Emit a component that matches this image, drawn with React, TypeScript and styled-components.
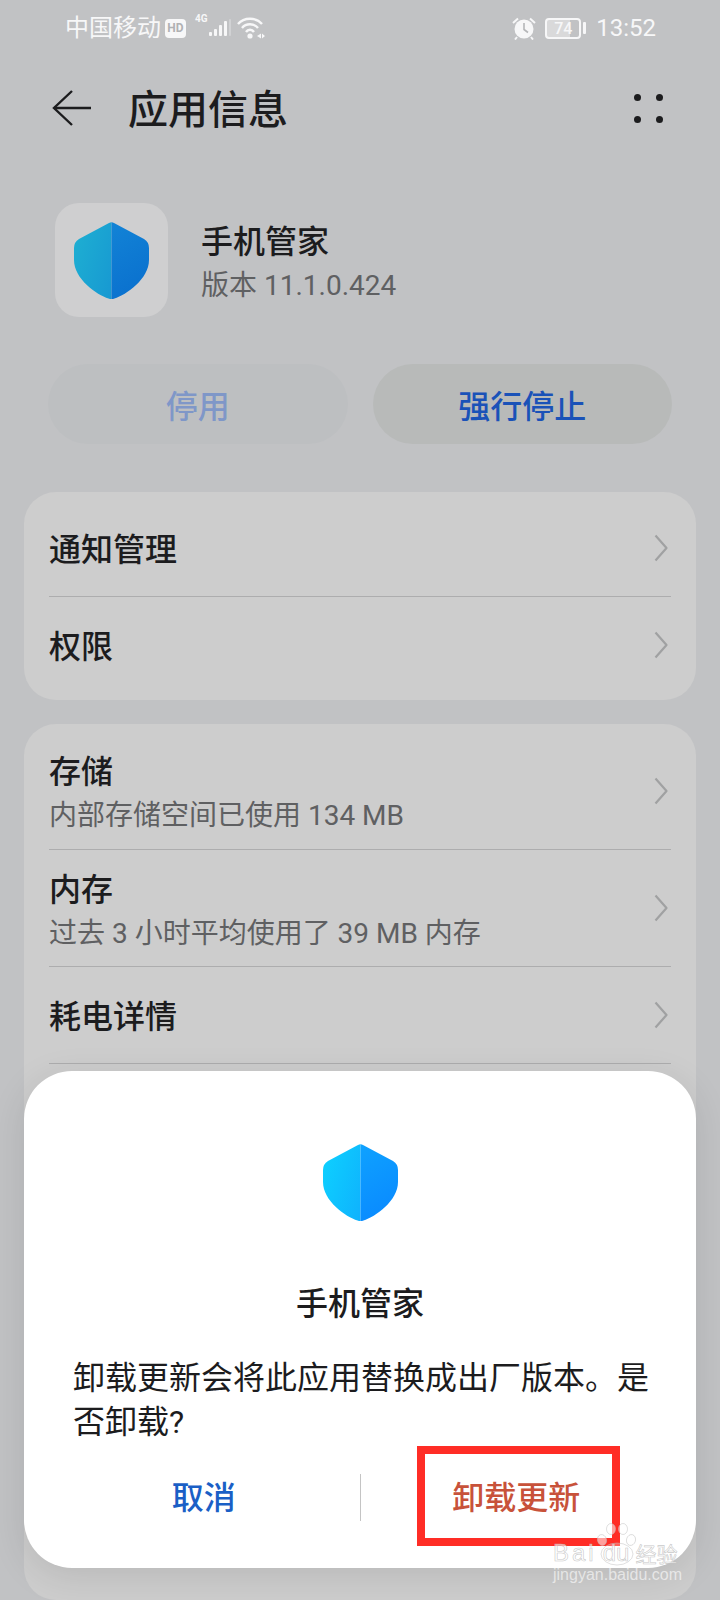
import styled, { createGlobalStyle } from 'styled-components';

const GlobalStyle = createGlobalStyle`
  html, body {
    margin: 0;
    padding: 0;
    background: #c1c2c4;
  }
  * {
    box-sizing: border-box;
  }
`;

const SHIELD_PATH =
  'M35 .9 Q37.5 -.4 40 .9 L70 17 Q75 20 75 26 V38 C75 57 52 73 40.5 76.5 Q37.5 77.5 34.5 76.5 C23 73 0 57 0 38 V26 Q0 20 5 17 Z';

const Shield = ({ id, colors }: { id: string; colors: [string, string, string, string] }) => (
  <svg width="75" height="77" viewBox="0 0 75 77">
    <defs>
      <linearGradient id={`${id}-l`} x1="0" y1="0" x2="1" y2="0.3">
        <stop offset="0" stopColor={colors[0]} />
        <stop offset="1" stopColor={colors[1]} />
      </linearGradient>
      <linearGradient id={`${id}-r`} x1="0" y1="0" x2="0.6" y2="1">
        <stop offset="0" stopColor={colors[2]} />
        <stop offset="1" stopColor={colors[3]} />
      </linearGradient>
      <clipPath id={`${id}-cl`}>
        <rect x="0" y="0" width="37.5" height="77" />
      </clipPath>
      <clipPath id={`${id}-cr`}>
        <rect x="37.5" y="0" width="37.5" height="77" />
      </clipPath>
    </defs>
    <path d={SHIELD_PATH} fill={`url(#${id}-l)`} clipPath={`url(#${id}-cl)`} />
    <path d={SHIELD_PATH} fill={`url(#${id}-r)`} clipPath={`url(#${id}-cr)`} />
  </svg>
);

const Chevron = () => (
  <svg width="14" height="28" viewBox="0 0 14 28" fill="none">
    <path d="M1.5 1.5 L12.5 14 L1.5 26.5" stroke="#a0a1a2" strokeWidth="2.2" strokeLinejoin="round" />
  </svg>
);

export default function App() {
  return (
    <Page>
      <GlobalStyle />
      <StatusBar>
        <StatusLeft>
          <Carrier>中国移动</Carrier>
          <HdBadge>HD</HdBadge>
          <FourG>4G</FourG>
          <svg width="22" height="18" viewBox="0 0 22 18" fill="#f7f7f8">
            <rect x="0" y="13" width="3" height="4" rx="1" />
            <rect x="5" y="10" width="3" height="7" rx="1" />
            <rect x="10" y="6" width="3" height="11" rx="1" />
            <rect x="15" y="2" width="3" height="15" rx="1" />
            <rect x="20" y="0" width="2" height="17" rx="1" opacity="0.3" />
          </svg>
          <WifiIcon width="28" height="24" viewBox="0 0 28 24" fill="none" stroke="#f7f7f8" strokeWidth="2.4">
            <path d="M1 8 C7 1 19 1 25 8" />
            <path d="M5 12 C9 7 17 7 21 12" />
            <path d="M9 16 C11 13 15 13 17 16" />
            <circle cx="13" cy="20" r="2.6" fill="#f7f7f8" stroke="none" />
            <path d="M20 20 L24 17.5 V22.5 Z M28 20 L25 17.5 V22.5 Z" fill="#f7f7f8" stroke="none" />
          </WifiIcon>
        </StatusLeft>
        <StatusRight>
          <svg width="24" height="23" viewBox="0 0 24 23">
            <circle cx="12" cy="12" r="9.5" fill="#f7f7f8" />
            <path d="M12 6 V12.5 L16 15.5" stroke="#b5b6b8" strokeWidth="1.6" fill="none" />
            <path d="M1 6 L6 1.5 M23 6 L18 1.5 M5 20 L3 22.5 M19 20 L21 22.5" stroke="#f7f7f8" strokeWidth="2" />
          </svg>
          <Battery>
            <BatteryBody>74</BatteryBody>
            <BatteryTip />
          </Battery>
          <Clock>13:52</Clock>
        </StatusRight>
      </StatusBar>

      <Header>
        <HeaderLeft>
          <svg width="40" height="36" viewBox="0 0 40 36" fill="none" stroke="#1c1c1e" strokeWidth="2.4">
            <path d="M20 1 L2 18 L20 35" />
            <path d="M2 18 H39" />
          </svg>
          <Title>应用信息</Title>
        </HeaderLeft>
        <MoreDots>
          <Dot />
          <Dot />
          <Dot />
          <Dot />
        </MoreDots>
      </Header>

      <AppInfo>
        <AppIcon>
          <Shield id="app" colors={['#1eb0d2', '#1590d2', '#1488d8', '#0b72cf']} />
        </AppIcon>
        <AppText>
          <AppName>手机管家</AppName>
          <AppVersion>版本 11.1.0.424</AppVersion>
        </AppText>
      </AppInfo>

      <ButtonRow>
        <PillButton $disabled>停用</PillButton>
        <PillButton>强行停止</PillButton>
      </ButtonRow>

      <Card>
        <Row $height={96}>
          <RowText>
            <RowTitle>通知管理</RowTitle>
          </RowText>
          <Chevron />
        </Row>
        <Row $height={96} $divider>
          <RowText>
            <RowTitle>权限</RowTitle>
          </RowText>
          <Chevron />
        </Row>
      </Card>

      <FillCard>
        <Row $height={117}>
          <RowText>
            <RowTitle>存储</RowTitle>
            <RowSub>内部存储空间已使用 134 MB</RowSub>
          </RowText>
          <Chevron />
        </Row>
        <Row $height={117} $divider>
          <RowText>
            <RowTitle>内存</RowTitle>
            <RowSub>过去 3 小时平均使用了 39 MB 内存</RowSub>
          </RowText>
          <Chevron />
        </Row>
        <Row $height={97} $divider>
          <RowText>
            <RowTitle>耗电详情</RowTitle>
          </RowText>
          <Chevron />
        </Row>
        <Row $height={40} $divider />
      </FillCard>

      <Dialog>
        <DialogIcon>
          <Shield id="dlg" colors={['#0dd2ff', '#10a6fc', '#10a8ff', '#0a8cff']} />
        </DialogIcon>
        <DialogTitle>手机管家</DialogTitle>
        <DialogBody>卸载更新会将此应用替换成出厂版本。是否卸载?</DialogBody>
        <DialogActions>
          <ActionButton $color="#1a5fc6">取消</ActionButton>
          <ActionDivider />
          <ActionButton $color="#c8523a">
            卸载更新
            <RedMark />
          </ActionButton>
        </DialogActions>
      </Dialog>

      <Watermark>
        <svg width="40" height="44" viewBox="0 0 40 44">
          <g fill="rgba(255,255,255,0.55)" stroke="rgba(190,190,190,0.6)" strokeWidth="0.8">
            <ellipse cx="5" cy="17" rx="4.5" ry="5.5" transform="rotate(-15 5 17)" />
            <ellipse cx="14" cy="6" rx="4.5" ry="5.5" />
            <ellipse cx="26" cy="6" rx="4.5" ry="5.5" />
            <ellipse cx="34" cy="17" rx="4.5" ry="5.5" transform="rotate(15 34 17)" />
            <ellipse cx="20" cy="31" rx="16" ry="11" fill="rgba(255,255,255,0.25)" />
          </g>
        </svg>
        <WatermarkLogo>
          <WatermarkBai>Bai</WatermarkBai>
          <WatermarkDu>du</WatermarkDu>
          <WatermarkCn>经验</WatermarkCn>
        </WatermarkLogo>
        <WatermarkUrl>jingyan.baidu.com</WatermarkUrl>
      </Watermark>
    </Page>
  );
}

const Page = styled.div`
  position: relative;
  display: flex;
  flex-direction: column;
  width: 720px;
  height: 1600px;
  overflow: hidden;
  background: #c1c2c4;
  font-family: Roboto, 'Noto Sans CJK SC', sans-serif;
  color: #1c1c1e;
`;

const StatusBar = styled.div`
  display: flex;
  align-items: center;
  justify-content: space-between;
  height: 54px;
  padding: 2px 64px 0 65px;
  color: #f7f7f8;
`;

const StatusLeft = styled.div`
  display: flex;
  align-items: center;
  gap: 4px;
`;

const StatusRight = styled.div`
  display: flex;
  align-items: center;
  gap: 9px;
`;

const Carrier = styled.span`
  font-size: 24px;
  line-height: 30px;
`;

const HdBadge = styled.span`
  display: flex;
  align-items: center;
  justify-content: center;
  width: 21px;
  height: 19px;
  border-radius: 4px;
  background: #f7f7f8;
  color: #b0b1b3;
  font-size: 12px;
  font-weight: 700;
`;

const FourG = styled.span`
  align-self: flex-start;
  margin: 0 -3px 0 5px;
  font-size: 10px;
  line-height: 12px;
  font-weight: 700;
`;

const WifiIcon = styled.svg`
  margin-left: 2px;
`;

const Battery = styled.div`
  display: flex;
  align-items: center;
  gap: 2px;
`;

const BatteryBody = styled.div`
  display: flex;
  align-items: center;
  justify-content: center;
  width: 36px;
  height: 21px;
  border: 2px solid #f7f7f8;
  border-radius: 4px;
  background: linear-gradient(90deg, #d9d9da 0 72%, transparent 72%);
  font-size: 16px;
  font-weight: 500;
`;

const BatteryTip = styled.div`
  width: 3px;
  height: 12px;
  border-radius: 1px;
  background: #f7f7f8;
`;

const Clock = styled.span`
  margin-left: 1px;
  font-size: 24px;
  line-height: 30px;
`;

const Header = styled.header`
  display: flex;
  align-items: center;
  justify-content: space-between;
  height: 108px;
  padding: 0 57px 0 52px;
`;

const HeaderLeft = styled.div`
  display: flex;
  align-items: center;
  gap: 36px;
`;

const Title = styled.h1`
  margin: 6px 0 0;
  font-size: 40px;
  line-height: 54px;
  font-weight: 500;
`;

const MoreDots = styled.div`
  display: grid;
  grid-template-columns: 7px 7px;
  gap: 15px;
  margin-top: 1px;
`;

const Dot = styled.span`
  width: 7px;
  height: 7px;
  border-radius: 50%;
  background: #1c1c1e;
`;

const AppInfo = styled.section`
  display: flex;
  align-items: center;
  gap: 33px;
  margin-top: 41px;
  padding-left: 55px;
`;

const AppIcon = styled.div`
  display: flex;
  align-items: center;
  justify-content: center;
  width: 113px;
  height: 114px;
  border-radius: 24px;
  background: #cfcfd0;
`;

const AppText = styled.div`
  display: flex;
  flex-direction: column;
  gap: 5px;
  padding-top: 5px;
`;

const AppName = styled.div`
  font-size: 32px;
  line-height: 42px;
  font-weight: 500;
`;

const AppVersion = styled.div`
  font-size: 28px;
  line-height: 36px;
  color: #5f6062;
`;

const ButtonRow = styled.div`
  display: flex;
  gap: 25px;
  margin-top: 47px;
  padding: 0 48px;
`;

const PillButton = styled.button<{ $disabled?: boolean }>`
  flex: 1;
  height: 80px;
  border: 0;
  border-radius: 40px;
  padding: 0;
  background: ${({ $disabled }) => ($disabled ? '#bdbfc1' : '#b8bab9')};
  color: ${({ $disabled }) => ($disabled ? '#7f97c8' : '#1a52b8')};
  font-family: inherit;
  font-size: 32px;
  font-weight: 500;
`;

const Card = styled.section`
  margin: 48px 24px 0;
  padding: 8px 0;
  border-radius: 32px;
  background: #cdcdcd;
`;

const FillCard = styled(Card)`
  flex: 1;
  margin-top: 24px;
  padding-bottom: 0;
`;

const Row = styled.div<{ $height: number; $divider?: boolean }>`
  display: flex;
  align-items: center;
  justify-content: space-between;
  height: ${({ $height }) => $height}px;
  margin: 0 25px;
  padding-right: 3px;
  border-top: ${({ $divider }) => ($divider ? '1px solid #adadae' : '0')};
`;

const RowText = styled.div`
  display: flex;
  flex-direction: column;
  gap: 5px;
  padding-top: 4px;
`;

const RowTitle = styled.div`
  font-size: 32px;
  line-height: 42px;
  font-weight: 500;
`;

const RowSub = styled.div`
  font-size: 28px;
  line-height: 36px;
  color: #5f6062;
`;

const Dialog = styled.div`
  position: absolute;
  left: 24px;
  right: 24px;
  bottom: 32px;
  height: 497px;
  padding-top: 73px;
  border-radius: 48px;
  background: #fff;
  box-shadow: 0 8px 36px rgba(0, 0, 0, 0.1);
`;

const DialogIcon = styled.div`
  display: flex;
  justify-content: center;
  height: 78px;
`;

const DialogTitle = styled.h2`
  margin: 60px 0 0;
  text-align: center;
  font-size: 32px;
  line-height: 44px;
  font-weight: 500;
`;

const DialogBody = styled.p`
  margin: 30px 0 0;
  padding: 0 44px 0 49px;
  font-size: 32px;
  line-height: 44px;
  color: #1c1c1e;
`;

const DialogActions = styled.div`
  display: flex;
  align-items: center;
  height: 100px;
  margin-top: 3px;
  padding: 0 24px;
`;

const ActionButton = styled.button<{ $color: string }>`
  position: relative;
  flex: 1;
  height: 100px;
  border: 0;
  padding: 0 0 4px;
  background: none;
  color: ${({ $color }) => $color};
  font-family: inherit;
  font-size: 32px;
  font-weight: 500;
`;

const ActionDivider = styled.div`
  width: 1px;
  height: 47px;
  background: #c4c4c4;
`;

const RedMark = styled.span`
  position: absolute;
  top: -1px;
  left: 56px;
  width: 203px;
  height: 100px;
  border: 8px solid #ff2d26;
`;

const Watermark = styled.div`
  position: absolute;
  left: 553px;
  top: 1520px;
  color: rgba(255, 255, 255, 0.6);
  font-family: 'Liberation Sans', 'Noto Sans CJK SC', sans-serif;

  svg {
    position: absolute;
    left: 44px;
    top: 3px;
  }
`;

const WatermarkLogo = styled.div`
  position: relative;
  display: flex;
  align-items: center;
  margin-top: 18px;
  height: 30px;
  font-size: 24px;
  white-space: nowrap;
  -webkit-text-stroke: 0.6px rgba(185, 185, 185, 0.8);
`;

const WatermarkBai = styled.span`
  letter-spacing: 3px;
`;

const WatermarkDu = styled.span`
  margin-left: 6px;
`;

const WatermarkCn = styled.span`
  margin-left: 6px;
  font-size: 21px;
`;

const WatermarkUrl = styled.div`
  font-size: 16px;
  line-height: 14px;
  white-space: nowrap;
`;
